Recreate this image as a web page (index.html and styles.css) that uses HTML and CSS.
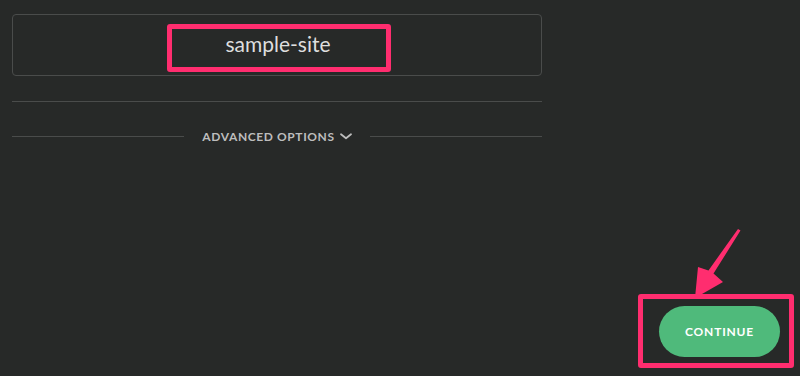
FILE: index.html
```html
<!DOCTYPE html>
<html lang="en">
<head>
    <meta charset="UTF-8">
    <meta name="viewport" content="width=device-width, initial-scale=1.0">
    <title>Site settings</title>
    <link rel="stylesheet" href="styles.css">
</head>
<body>
    <div class="page">
        <div class="panel">
            <div class="site-field">
                <span class="site-name">sample-site</span>
                <div class="mark mark-name"></div>
            </div>
            <div class="divider"></div>
            <div class="advanced">
                <span class="rule"></span>
                <span class="advanced-label">ADVANCED OPTIONS
                    <svg class="chevron" width="12" height="7" viewBox="0 0 12 7"><path d="M1 1.2 L6 5.2 L11 1.2" fill="none" stroke="#bdbdbd" stroke-width="1.8" stroke-linecap="round" stroke-linejoin="round"/></svg>
                </span>
                <span class="rule"></span>
            </div>
        </div>
        <div class="footer">
            <div class="btn-wrap">
                <button type="button" class="continue-btn">CONTINUE</button>
                <div class="mark mark-btn"></div>
                <svg class="arrow" width="56" height="76" viewBox="0 0 56 76">
                    <path d="M48 3 L50.5 4.5 L23.5 47.6 L33 56 L5 72 L8 41 L18.5 44.4 Z" fill="#ff2d6f"/>
                </svg>
            </div>
        </div>
    </div>
</body>
</html>
```

FILE: styles.css
```css
body {
    margin: 0;
    background-color: #272928;
    font-family: Lato, "Open Sans", sans-serif;
    color: #dcdcdc;
}
.page {
    height: 100vh;
    display: flex;
    flex-direction: column;
    box-sizing: border-box;
    padding: 14px 0 0 12px;
}
.panel {
    width: 530px;
}
.site-field {
    position: relative;
    height: 62px;
    border: 1px solid #4a4c4b;
    border-radius: 4px;
    box-sizing: border-box;
    display: flex;
    justify-content: center;
    align-items: center;
}
.site-name {
    font-size: 21px;
    color: #dedede;
    margin-top: -3px;
    margin-left: 2px;
}
.mark {
    position: absolute;
    border: 5px solid #ff2d6f;
    border-radius: 3px;
    box-sizing: border-box;
}
.mark-name {
    left: 154px;
    top: 9px;
    width: 224px;
    height: 48px;
}
.divider {
    height: 1px;
    background-color: #4a4c4b;
    margin-top: 25px;
}
.advanced {
    display: flex;
    align-items: center;
    margin-top: 27px;
}
.rule {
    flex: 1;
    height: 1px;
    background-color: #4a4c4b;
}
.advanced-label {
    display: flex;
    align-items: center;
    gap: 5px;
    padding: 0 18px;
    font-size: 12px;
    font-weight: bold;
    letter-spacing: 0.6px;
    color: #bdbdbd;
}
.footer {
    margin-top: auto;
    display: flex;
    justify-content: flex-end;
    padding: 0 20px 19px 0;
}
.btn-wrap {
    position: relative;
}
.continue-btn {
    width: 121px;
    height: 51px;
    border: none;
    border-radius: 26px;
    background-color: #4fba7b;
    color: #fff;
    font-family: Lato, "Open Sans", sans-serif;
    font-size: 12px;
    font-weight: bold;
    letter-spacing: 0.8px;
    cursor: pointer;
}
.mark-btn {
    left: -21px;
    top: -12px;
    right: -14px;
    bottom: -11px;
}
.arrow {
    position: absolute;
    left: 31px;
    top: -80px;
}
```
